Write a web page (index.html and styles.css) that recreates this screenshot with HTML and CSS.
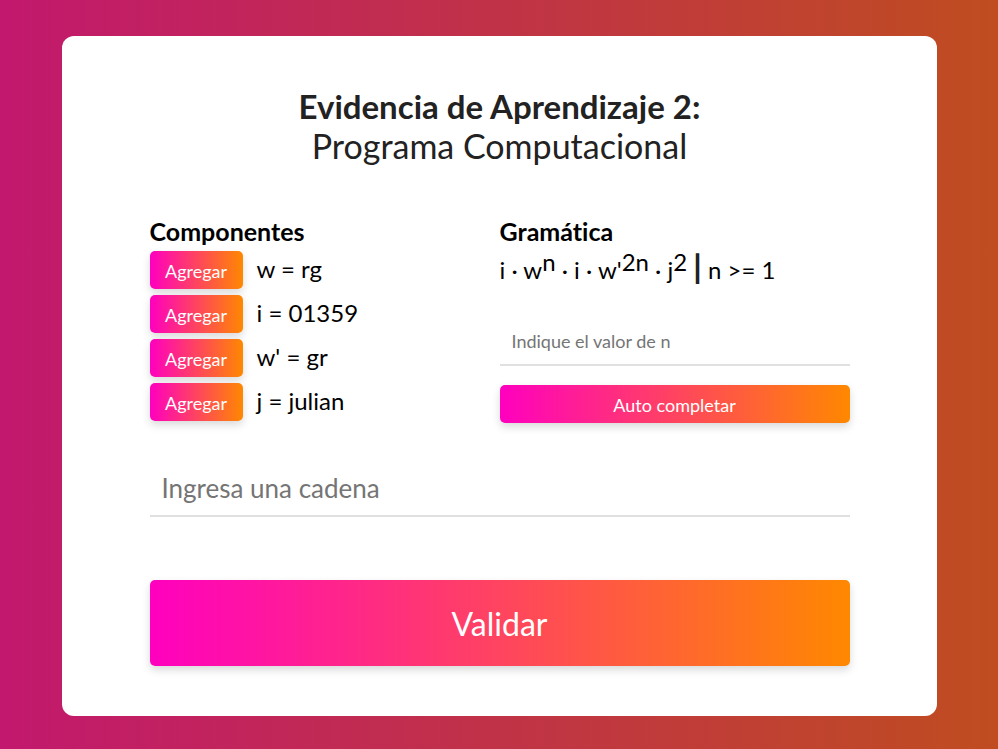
FILE: index.html
```html
<!DOCTYPE html>
<html lang="es">
<head>
<meta charset="utf-8">
<meta name="viewport" content="width=device-width, initial-scale=1">
<title>Evidencia de Aprendizaje 2</title>
<link rel="stylesheet" href="styles.css">
</head>
<body>
<main class="card">
  <h1 class="title"><strong>Evidencia de Aprendizaje 2:</strong><span>Programa Computacional</span></h1>
  <div class="columns">
    <section>
      <h2 class="heading">Componentes</h2>
      <ul class="components">
        <li><button class="btn btn-small" type="button">Agregar</button><span>w = rg</span></li>
        <li><button class="btn btn-small" type="button">Agregar</button><span>i = 01359</span></li>
        <li><button class="btn btn-small" type="button">Agregar</button><span>w' = gr</span></li>
        <li><button class="btn btn-small" type="button">Agregar</button><span>j = julian</span></li>
      </ul>
    </section>
    <section>
      <h2 class="heading">Gramática</h2>
      <p class="grammar">i · w<sup>n</sup> · i · w'<sup>2n</sup> · j<sup>2</sup> <b>|</b> n &gt;= 1</p>
      <input class="field field-small" type="text" placeholder="Indique el valor de n" aria-label="Indique el valor de n">
      <button class="btn btn-wide" type="button">Auto completar</button>
    </section>
  </div>
  <input class="field" type="text" placeholder="Ingresa una cadena" aria-label="Ingresa una cadena">
  <button class="btn btn-submit" type="button">Validar</button>
</main>
</body>
</html>
```
FILE: styles.css
```css
* {
  box-sizing: border-box;
}

body {
  margin: 0;
  min-height: 100vh;
  padding: 36px 61px 33px 62px;
  font-family: Lato, "Open Sans", sans-serif;
  font-size: 24px;
  font-variant-ligatures: none;
  line-height: 32px;
  color: #000;
  background: linear-gradient(to right, #c2186e, #bf4d20);
}

.card {
  padding: 50px 10%;
  border-radius: 12px;
  background: #fff;
}

.title {
  display: flex;
  flex-direction: column;
  margin: 0 0 49px;
  font-size: 34px;
  line-height: 40px;
  font-weight: 400;
  text-align: center;
  color: #222;
}

.title strong {
  font-size: 33px;
}

.columns {
  display: grid;
  grid-template-columns: 1fr 1fr;
}

.heading {
  margin: 0 0 4px;
  font-size: 25px;
  line-height: 32px;
}

.components {
  display: grid;
  gap: 6px;
  margin: 0;
  padding: 0;
  list-style: none;
}

.components li {
  display: flex;
  align-items: flex-start;
  gap: 14px;
  line-height: 36px;
}

.btn {
  padding: 2px 14px 0;
  border: 0;
  border-radius: 5px;
  font: inherit;
  color: #fff;
  background: linear-gradient(to right, #ff00bf, #ff8800);
  box-shadow: 0 4px 8px rgba(0, 0, 0, 0.15);
}

.btn-small,
.btn-wide {
  height: 38px;
  font-size: 18px;
  line-height: 24px;
}

.btn-small {
  min-width: 93px;
}

.btn-wide {
  display: block;
  width: 100%;
}

.btn-submit {
  display: block;
  width: 100%;
  height: 86px;
  font-size: 32px;
}

.grammar {
  height: 38px;
  margin: 0 0 29px;
  line-height: 38px;
}

.grammar sup {
  font-size: inherit;
  line-height: 0;
  vertical-align: 8px;
}

.grammar b {
  font-size: 32px;
  font-weight: 900;
  line-height: 0;
  color: #222;
}

.field {
  display: block;
  width: 100%;
  height: 56px;
  margin: 38px 0 63px;
  padding: 0 12px;
  border: 0;
  border-bottom: 2px solid #e0e0e0;
  font: inherit;
  font-size: 26px;
  background: none;
}

.field::placeholder {
  color: #757575;
  opacity: 1;
}

.field-small {
  height: 48px;
  margin: 0 0 19px;
  font-size: 18px;
}
```
